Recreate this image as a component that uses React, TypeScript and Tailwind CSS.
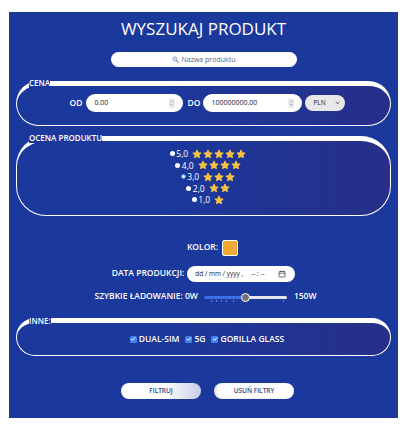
import React from "react";

const Star = () => (
  <svg width="10" height="10" viewBox="0 0 24 24" className="shrink-0">
    <path
      d="M12 2.8l2.8 6 6.5.8-4.8 4.5 1.2 6.5L12 17.4l-5.7 3.2 1.2-6.5-4.8-4.5 6.5-.8z"
      fill="#f4c245"
      stroke="#f4c245"
      strokeWidth="2.6"
      strokeLinejoin="round"
    />
  </svg>
);

const Checkbox = () => (
  <span className="flex h-[7px] w-[7px] shrink-0 items-center justify-center rounded-[1.5px] bg-[#3f83f0]">
    <svg width="6" height="6" viewBox="0 0 12 12">
      <path d="M2.5 6.3l2.4 2.4L9.6 3.6" fill="none" stroke="white" strokeWidth="2" strokeLinecap="round" strokeLinejoin="round" />
    </svg>
  </span>
);

const Spinner = () => (
  <span className="flex h-[10px] w-[6px] flex-col items-center justify-center rounded-[1px] bg-[#ececec]">
    <svg width="5" height="8" viewBox="0 0 10 16">
      <path d="M2.5 6l2.5-2.5L7.5 6M2.5 10l2.5 2.5L7.5 10" fill="none" stroke="#8a8a8a" strokeWidth="1.3" strokeLinecap="round" />
    </svg>
  </span>
);

interface GroupProps {
  legend: string;
  className?: string;
  children: React.ReactNode;
}

function Group({ legend, className, children }: GroupProps) {
  return (
    <fieldset
      className={`mx-[7px] rounded-[30px] border-x border-b border-t-[5px] border-white bg-linear-to-r from-transparent from-40% to-[#272f88] ${className ?? ""}`}
    >
      <legend className="ml-[12px] text-[8px] font-semibold leading-[10px] text-white">{legend}</legend>
      {children}
    </fieldset>
  );
}

const ratings = [5, 4, 3, 2, 1];
const ticks = [7, 12, 17, 22, 29, 40, 79];

export default function App() {
  return (
    <div className="h-[429px] w-[405px] bg-white pl-[9px] pt-[12px] font-['Open_Sans',sans-serif]">
      <div className="flex h-[406px] w-[389px] flex-col bg-[#1b389c] text-white">
        <h1 className="mt-[5px] text-center text-[17px] leading-[23px]">WYSZUKAJ PRODUKT</h1>

        {/* Search */}
        <div className="mx-auto mt-[12px] flex h-[15px] w-[186px] items-center justify-center gap-[3px] rounded-full bg-white">
          <svg width="7" height="7" viewBox="0 0 12 12">
            <circle cx="5" cy="5" r="3.4" fill="#cfe3f7" stroke="#7e9cc4" strokeWidth="1.4" />
            <path d="M7.5 7.5l3.3 3.3" stroke="#8a8f99" strokeWidth="2" strokeLinecap="round" />
          </svg>
          <span className="text-[7px] leading-none text-[#5f636c]">Nazwa produktu</span>
        </div>

        {/* Price */}
        <Group legend="CENA" className="mt-[11px] pb-[13px] pt-[6px]">
          <div className="flex items-center justify-center gap-[3px] pl-[8px] text-[8.5px] font-semibold">
            <span>OD</span>
            <div className="flex h-[18px] w-[97px] items-center justify-between rounded-full bg-white pl-[9px] pr-[8px] text-[7px] font-normal text-[#222]">
              <span>0.00</span>
              <Spinner />
            </div>
            <span className="ml-[2px]">DO</span>
            <div className="flex h-[18px] w-[99px] items-center justify-between rounded-full bg-white pl-[8px] pr-[8px] text-[7px] font-normal text-[#222]">
              <span>100000000.00</span>
              <Spinner />
            </div>
            <div className="flex h-[16px] w-[40px] items-center justify-between rounded-full bg-[#e8e8ea] pl-[8px] pr-[5px] text-[6.5px] font-normal text-[#222]">
              <span>PLN</span>
              <svg width="5" height="4" viewBox="0 0 10 8">
                <path d="M2 2.5l3 3 3-3" fill="none" stroke="#333" strokeWidth="1.6" strokeLinecap="round" strokeLinejoin="round" />
              </svg>
            </div>
          </div>
        </Group>

        {/* Rating */}
        <Group legend="OCENA PRODUKTU" className="mt-[7px] pb-[9px] pt-[5px]">
          <div className="flex flex-col items-center pl-[9px]">
            {ratings.map((r) => (
              <div key={r} className="flex h-[11.5px] items-center">
                {r === 3 ? (
                  <span className="h-[5px] w-[5px] rounded-full border-[1.3px] border-[#4a8cf5] bg-white" />
                ) : (
                  <span className="h-[5px] w-[5px] rounded-full bg-white" />
                )}
                <span className="ml-[1.5px] mr-[4px] text-[8.5px] leading-[11.5px]">{r},0</span>
                <div className="flex gap-[1px]">
                  {Array.from({ length: r }).map((_, i) => (
                    <Star key={i} />
                  ))}
                </div>
              </div>
            ))}
          </div>
        </Group>

        {/* Colour */}
        <div className="mt-[24px] flex items-center justify-center gap-[4px] pl-[18px] text-[8.5px] font-semibold">
          <span>KOLOR:</span>
          <span className="h-[16px] w-[16px] rounded-[2px] border-[1.5px] border-white bg-[#f3a936]" />
        </div>

        {/* Date */}
        <div className="mt-[10px] flex items-center justify-center gap-[3px] text-[8.5px] font-semibold">
          <span>DATA PRODUKCJI:</span>
          <div className="flex h-[16px] w-[108px] items-center rounded-full bg-white pl-[8px] pr-[9px] text-[6.5px] font-normal text-[#222]">
            <span>dd / mm / yyyy ,</span>
            <span className="ml-[8px]">-- : --</span>
            <svg className="ml-auto" width="8" height="8" viewBox="0 0 16 16">
              <rect x="2" y="3" width="12" height="11" rx="1" fill="none" stroke="#333" strokeWidth="1.4" />
              <path d="M2 6.5h12M5 1.5v3M11 1.5v3" stroke="#333" strokeWidth="1.4" />
            </svg>
          </div>
        </div>

        {/* Charging slider */}
        <div className="mt-[10px] flex h-[10px] items-center justify-center gap-[6px] pl-[4px] text-[8.5px] font-semibold">
          <span>SZYBKIE ŁADOWANIE: 0W</span>
          <div className="relative h-[10px] w-[83px]">
            <div className="absolute left-0 top-[4px] flex h-[3px] w-full overflow-hidden rounded-full">
              <span className="h-full w-[42px] bg-[#3a6fe6]" />
              <span className="h-full flex-1 bg-[#e6e7ec]" />
            </div>
            {ticks.map((t) => (
              <span key={t} className="absolute top-[8px] h-[2px] w-[0.5px] bg-[#7180b8]" style={{ left: t }} />
            ))}
            <span className="absolute left-[37px] top-[1px] h-[9px] w-[9px] rounded-full border-[1.5px] border-white bg-[#6e7179]" />
          </div>
          <span className="ml-[1px]">150W</span>
        </div>

        {/* Other */}
        <Group legend="INNE:" className="mt-[14px] pb-[10px] pt-[8px]">
          <div className="flex h-[11px] items-center justify-center gap-[6px] pl-[7px] text-[8.5px] font-semibold">
            <label className="flex items-center gap-[2px]">
              <Checkbox />
              DUAL-SIM
            </label>
            <label className="flex items-center gap-[2px]">
              <Checkbox />
              5G
            </label>
            <label className="flex items-center gap-[2px]">
              <Checkbox />
              GORILLA GLASS
            </label>
          </div>
        </Group>

        {/* Buttons */}
        <div className="mt-[27px] flex justify-center gap-[13px] pl-[8px]">
          <button className="h-[16px] w-[80px] rounded-full bg-linear-to-r from-white from-55% to-[#c8cfe6] text-[6.5px] font-semibold text-[#33427a]">
            FILTRUJ
          </button>
          <button className="h-[16px] w-[80px] rounded-full bg-white text-[6.5px] font-semibold text-[#33427a] shadow-[inset_2px_0_3px_rgba(0,0,0,0.12)]">
            USUŃ FILTRY
          </button>
        </div>
      </div>
    </div>
  );
}
